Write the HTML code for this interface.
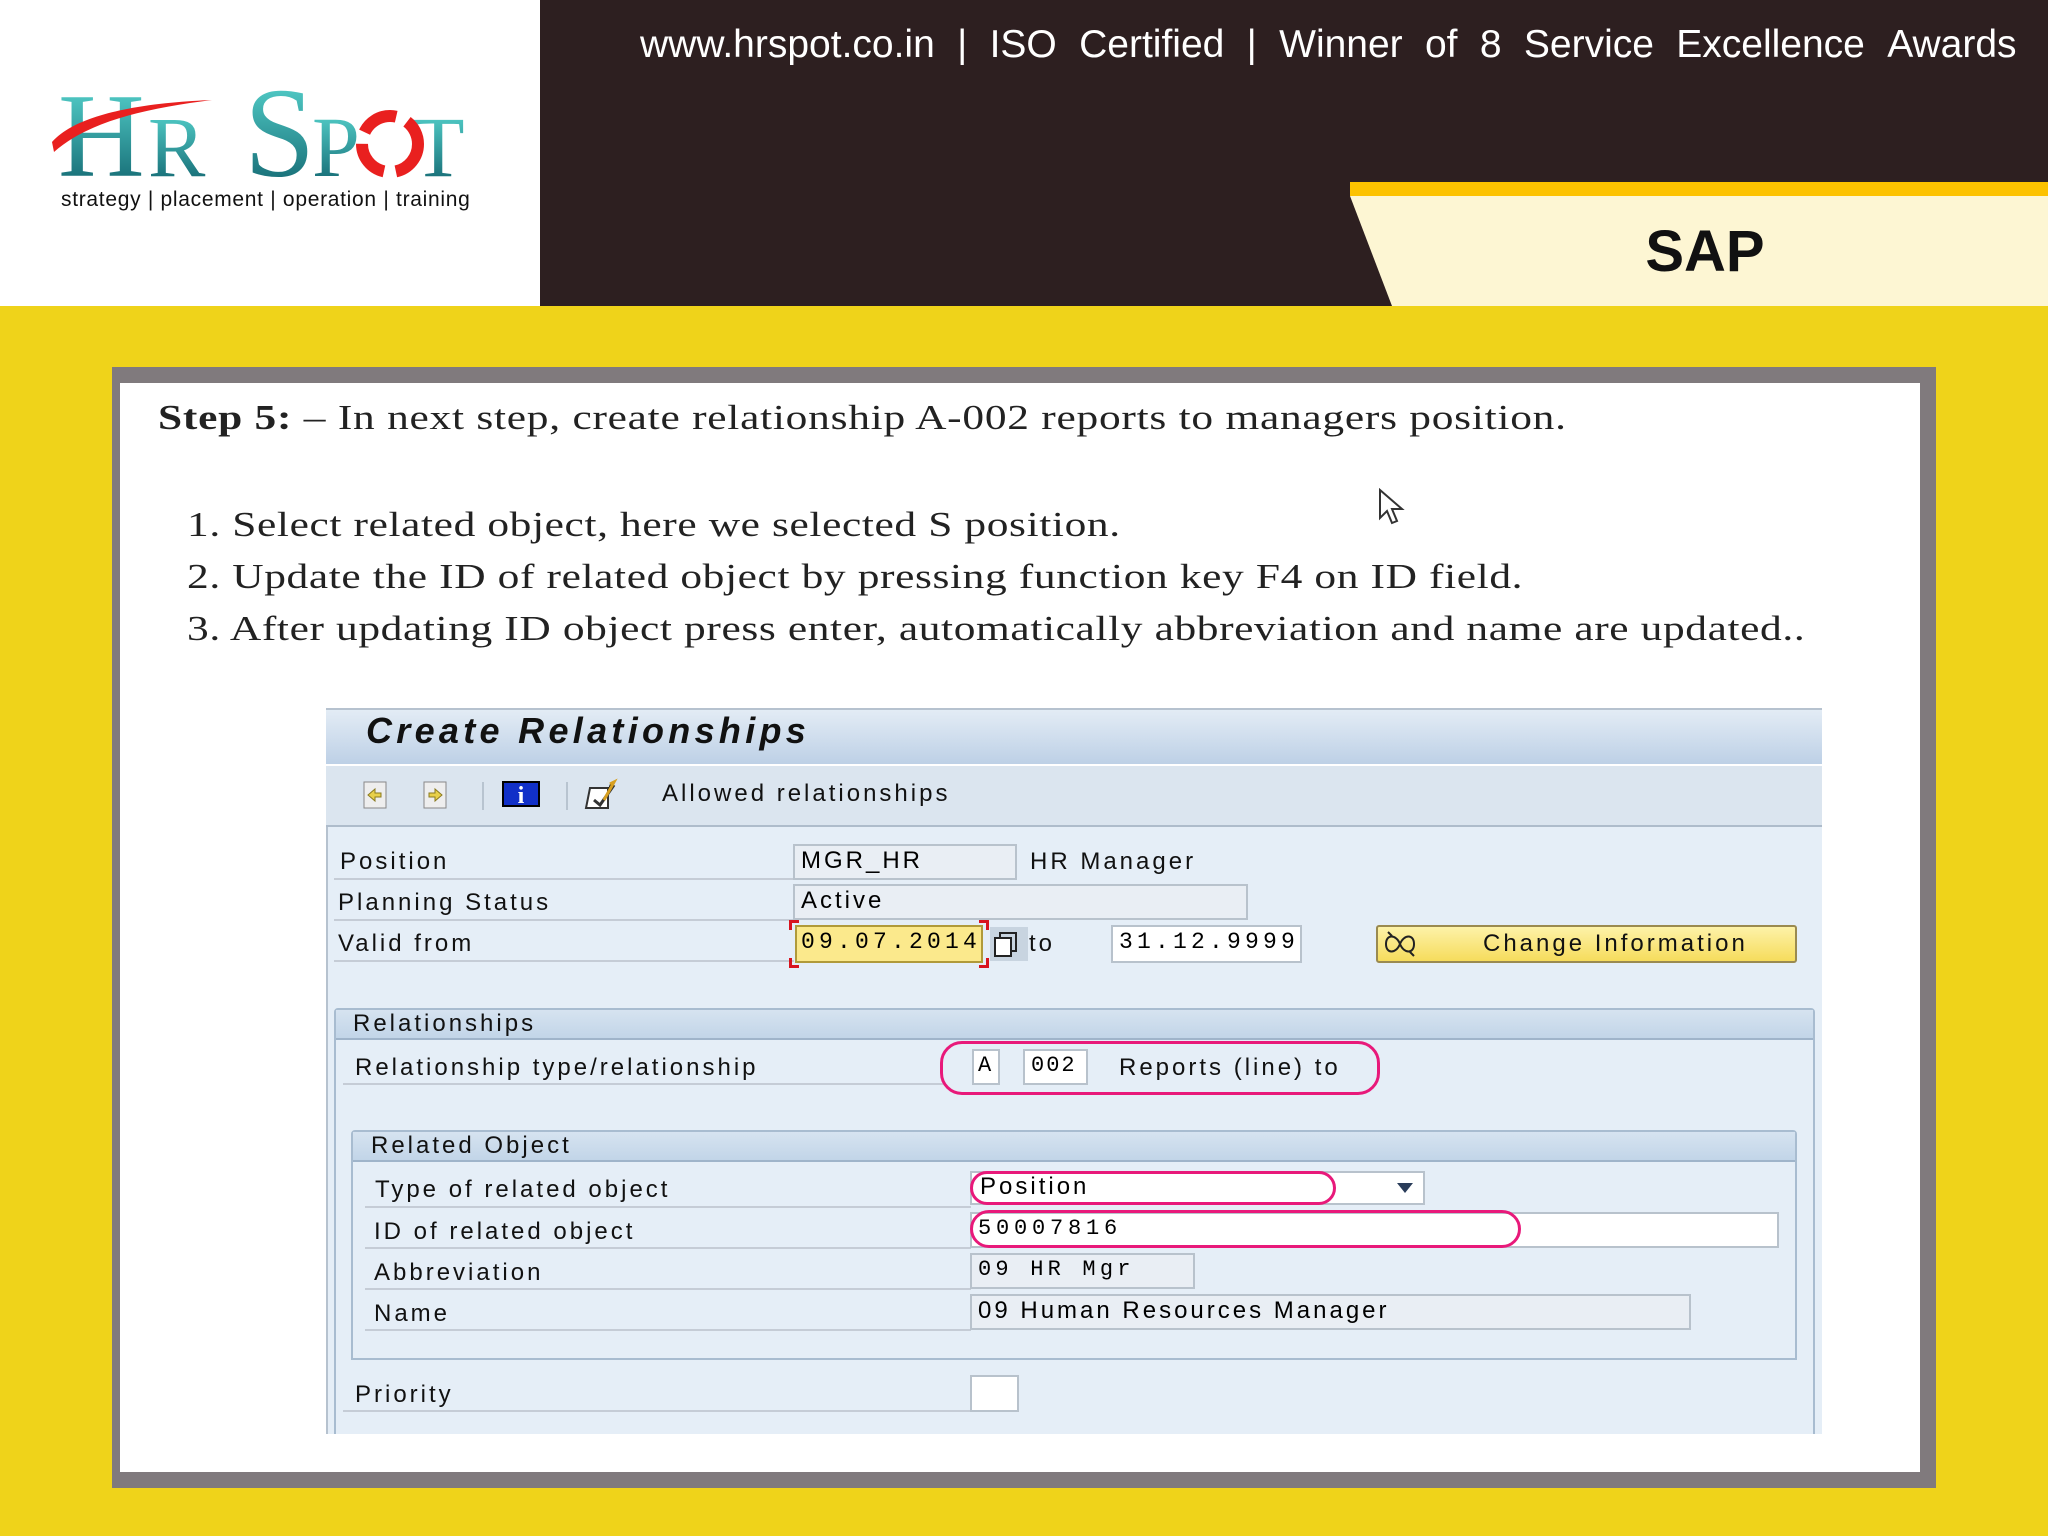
<!DOCTYPE html>
<html><head><meta charset="utf-8"><style>
*{margin:0;padding:0;box-sizing:border-box}
body{width:2048px;height:1536px;position:relative;overflow:hidden;background:#efd31a;font-family:"Liberation Sans",sans-serif}
.a{position:absolute}
.lbl{position:absolute;font-size:24px;color:#111;letter-spacing:3px;white-space:nowrap}
.ln{position:absolute;height:2px;background:#c5ccd6}
.fld{position:absolute;border:2px solid #b8c2cc;background:#e9eef4;font-size:24px;letter-spacing:3px;padding-left:6px;white-space:nowrap;line-height:30px}
.mono{font-family:"Liberation Mono",monospace;letter-spacing:4.2px}
.oval{position:absolute;border:3px solid #e8197a;border-radius:22px}
.serif{font-family:"Liberation Serif",serif;color:#222;white-space:nowrap;transform:scaleX(1.24);transform-origin:0 0}
.c{position:absolute;width:10px;height:10px;border-color:#d8141e;border-style:solid;border-width:0}
</style></head><body>
<!-- header -->
<div class="a" style="left:0;top:0;width:2048px;height:306px;background:#2d1f20"></div>
<div class="a" style="left:0;top:0;width:540px;height:306px;background:#fff"></div>
<div class="a" style="left:640px;top:23px;width:1400px;font-size:39px;color:#fff;white-space:nowrap;word-spacing:11.5px">www.hrspot.co.in&nbsp;|&nbsp;ISO&nbsp;Certified&nbsp;|&nbsp;Winner&nbsp;of&nbsp;8&nbsp;Service&nbsp;Excellence&nbsp;Awards</div>
<svg class="a" style="left:1335px;top:182px" width="713" height="124"><polygon points="15,0 713,0 713,14 15,14" fill="#fcc200"/><polygon points="15,14 713,14 713,124 57,124" fill="#fdf6d3"/></svg>
<div class="a" style="left:1600px;top:218px;width:210px;text-align:center;font-size:58px;font-weight:bold;color:#111">SAP</div>
<!-- logo -->
<svg class="a" style="left:40px;top:80px" width="470" height="110">
<defs><linearGradient id="g" x1="0" y1="0" x2="0" y2="1"><stop offset="0" stop-color="#5ee0d8"/><stop offset="1" stop-color="#0b5a66"/></linearGradient></defs>
<text x="18" y="96" font-family="Liberation Serif,serif" font-size="120" fill="url(#g)">H</text>
<text x="108" y="96" font-family="Liberation Serif,serif" font-size="86" fill="url(#g)">R</text>
<text x="204" y="96" font-family="Liberation Serif,serif" font-size="128" fill="url(#g)">S</text>
<text x="272" y="96" font-family="Liberation Serif,serif" font-size="86" fill="url(#g)">P</text>
<text x="372" y="96" font-family="Liberation Serif,serif" font-size="86" fill="url(#g)">T</text>
<circle cx="350" cy="64" r="28" fill="none" stroke="#e9201f" stroke-width="12" stroke-dasharray="38 12"/>
<path d="M12,62 C40,30 120,22 172,20 C110,28 50,40 14,72 Z" fill="#e9201f"/>
</svg>
<div class="a" style="left:61px;top:188px;font-size:21px;color:#111;white-space:nowrap;letter-spacing:0.7px">strategy | placement | operation | training</div>
<!-- frame -->
<div class="a" style="left:112px;top:367px;width:1824px;height:1121px;background:#807a7d"></div>
<div class="a" style="left:120px;top:383px;width:1800px;height:1089px;background:#fff"></div>
<div class="a serif" style="left:158px;top:398px;font-size:35px;letter-spacing:0.6px"><b>Step 5:</b> – In next step, create relationship A-002 reports to managers position.</div>
<div class="a serif" style="left:187px;top:499px;font-size:35px;letter-spacing:0.5px;line-height:52px">1. Select related object, here we selected S position.<br>2. Update the ID of related object by pressing function key F4 on ID field.<br>3. After updating ID object press enter, automatically abbreviation and name are updated..</div>
<svg class="a" style="left:1378px;top:488px" width="30" height="40"><path d="M2,2 L2,30 L9,23 L14,35 L19,33 L14,21 L24,21 Z" fill="#fff" stroke="#333" stroke-width="2"/></svg>
<!-- SAP window -->
<div class="a" style="left:326px;top:708px;width:1496px;height:726px;background:#e5eef7;border-left:2px solid #b6c2cf"></div>
<div class="a" style="left:326px;top:708px;width:1496px;height:56px;background:linear-gradient(#e3ecf5,#bdd0e6);border-top:2px solid #b6c2cf"></div>
<div class="a" style="left:366px;top:710px;font-size:36px;font-weight:bold;font-style:italic;color:#111;letter-spacing:4.3px">Create Relationships</div>
<div class="a" style="left:326px;top:764px;width:1496px;height:63px;background:#dbe5ef;border-top:2px solid #fff;border-bottom:2px solid #aebccb"></div>
<svg class="a" style="left:360px;top:778px" width="300" height="36">
<rect x="4" y="4" width="22" height="26" fill="#eee" stroke="#888"/><path d="M8,17 l7,-6 v4 h6 v4 h-6 v4 z" fill="#e8d04a" stroke="#8a7a20"/>
<rect x="64" y="4" width="22" height="26" fill="#eee" stroke="#888"/><path d="M82,17 l-7,-6 v4 h-6 v4 h6 v4 z" fill="#e8d04a" stroke="#8a7a20"/>
<line x1="123" y1="4" x2="123" y2="32" stroke="#b8c4d0" stroke-width="2"/>
<rect x="143" y="4" width="36" height="24" fill="#1130c8" stroke="#000" stroke-width="2"/><text x="161" y="25" font-family="Liberation Serif,serif" font-weight="bold" font-size="24" fill="#fff" text-anchor="middle">i</text>
<line x1="207" y1="4" x2="207" y2="32" stroke="#b8c4d0" stroke-width="2"/>
<path d="M230,10 h18 v20 h-22 z" fill="#fff" stroke="#333" stroke-width="2"/><path d="M234,22 l6,5 l14,-20" fill="none" stroke="#333" stroke-width="3"/><path d="M250,6 l4,-2 l-10,18" stroke="#d8a020" stroke-width="3"/>
</svg>
<div class="lbl" style="left:662px;top:780px">Allowed relationships</div>
<!-- header rows -->
<div class="lbl" style="left:340px;top:848px">Position</div>
<div class="ln" style="left:334px;top:878px;width:460px"></div>
<div class="fld" style="left:793px;top:844px;width:224px;height:36px">MGR_HR</div>
<div class="lbl" style="left:1030px;top:848px">HR Manager</div>
<div class="lbl" style="left:338px;top:889px">Planning Status</div>
<div class="ln" style="left:334px;top:919px;width:460px"></div>
<div class="fld" style="left:793px;top:884px;width:455px;height:36px">Active</div>
<div class="lbl" style="left:338px;top:930px">Valid from</div>
<div class="ln" style="left:334px;top:960px;width:460px"></div>
<div class="fld mono" style="left:795px;top:925px;width:188px;height:38px;background:#fbe98c;border-color:#b09a3a;padding-left:4px;font-size:23px">09.07.2014</div>
<div class="c" style="left:789px;top:920px;border-top-width:3px;border-left-width:3px"></div>
<div class="c" style="left:979px;top:920px;border-top-width:3px;border-right-width:3px"></div>
<div class="c" style="left:789px;top:958px;border-bottom-width:3px;border-left-width:3px"></div>
<div class="c" style="left:979px;top:958px;border-bottom-width:3px;border-right-width:3px"></div>
<div class="a" style="left:990px;top:927px;width:38px;height:34px;background:#c8d4e0"></div>
<svg class="a" style="left:992px;top:930px" width="30" height="30"><rect x="3" y="8" width="16" height="18" fill="#fff" stroke="#222" stroke-width="2"/><path d="M8,8 V3 H24 V21 H19" fill="none" stroke="#222" stroke-width="2"/></svg>
<div class="lbl" style="left:1029px;top:930px">to</div>
<div class="fld mono" style="left:1111px;top:925px;width:191px;height:38px;background:#fff;font-size:23px">31.12.9999</div>
<div class="a" style="left:1376px;top:925px;width:421px;height:38px;background:linear-gradient(#fdf2a8,#f6dc5c);border:2px solid #9a8a50;border-radius:3px"></div>
<svg class="a" style="left:1382px;top:930px" width="40" height="28"><path d="M4,14 C4,4 14,4 18,14 C22,24 32,24 32,14 C32,4 22,4 18,14 C14,24 4,24 4,14 Z M10,6 L6,2 M28,22 l4,4" fill="none" stroke="#222" stroke-width="2"/></svg>
<div class="lbl" style="left:1483px;top:930px">Change Information</div>
<!-- Relationships group -->
<div class="a" style="left:334px;top:1008px;width:1481px;height:430px;border:2px solid #a8bcd0;border-radius:4px 4px 0 0;background:#e5eef7"></div>
<div class="a" style="left:336px;top:1010px;width:1477px;height:30px;background:linear-gradient(#d6e3f0,#c2d5e8);border-bottom:2px solid #9fb4ca"></div>
<div class="lbl" style="left:353px;top:1010px">Relationships</div>
<div class="lbl" style="left:355px;top:1054px">Relationship type/relationship</div>
<div class="ln" style="left:343px;top:1083px;width:600px"></div>
<div class="fld mono" style="left:972px;top:1049px;width:28px;height:36px;background:#fff;padding-left:4px;font-size:22px">A</div>
<div class="fld mono" style="left:1023px;top:1049px;width:65px;height:36px;background:#fff;padding-left:6px;font-size:22px;letter-spacing:2px">002</div>
<div class="lbl" style="left:1119px;top:1054px">Reports (line) to</div>
<div class="oval" style="left:940px;top:1041px;width:440px;height:54px"></div>
<!-- Related object -->
<div class="a" style="left:351px;top:1130px;width:1446px;height:230px;border:2px solid #a8bcd0;border-radius:4px 4px 0 0"></div>
<div class="a" style="left:353px;top:1132px;width:1442px;height:30px;background:linear-gradient(#d6e3f0,#c2d5e8);border-bottom:2px solid #9fb4ca"></div>
<div class="lbl" style="left:371px;top:1132px">Related Object</div>
<div class="lbl" style="left:375px;top:1176px">Type of related object</div>
<div class="ln" style="left:365px;top:1206px;width:606px"></div>
<div class="fld" style="left:970px;top:1171px;width:455px;height:34px;background:#fff;padding-left:8px;line-height:28px">Position</div>
<svg class="a" style="left:1396px;top:1182px" width="18" height="12"><path d="M1,1 H17 L9,11 Z" fill="#2a3d5a"/></svg>
<div class="oval" style="left:970px;top:1171px;width:366px;height:34px;border-radius:17px"></div>
<div class="lbl" style="left:374px;top:1218px">ID of related object</div>
<div class="ln" style="left:365px;top:1247px;width:606px"></div>
<div class="fld mono" style="left:970px;top:1212px;width:809px;height:36px;background:#fff;font-size:22px;padding-left:6px;letter-spacing:4.8px">50007816</div>
<div class="oval" style="left:970px;top:1210px;width:551px;height:38px;border-radius:19px"></div>
<div class="lbl" style="left:374px;top:1259px">Abbreviation</div>
<div class="ln" style="left:365px;top:1288px;width:606px"></div>
<div class="fld mono" style="left:970px;top:1253px;width:225px;height:36px;font-size:22px">09 HR Mgr</div>
<div class="lbl" style="left:374px;top:1300px">Name</div>
<div class="ln" style="left:365px;top:1329px;width:606px"></div>
<div class="fld" style="left:970px;top:1294px;width:721px;height:36px">09 Human Resources Manager</div>
<div class="lbl" style="left:355px;top:1381px">Priority</div>
<div class="ln" style="left:343px;top:1410px;width:628px"></div>
<div class="a" style="left:970px;top:1375px;width:49px;height:37px;background:#fff;border:2px solid #b8c2cc"></div>
<div class="a" style="left:326px;top:1434px;width:1500px;height:38px;background:#fff"></div>
</body></html>
